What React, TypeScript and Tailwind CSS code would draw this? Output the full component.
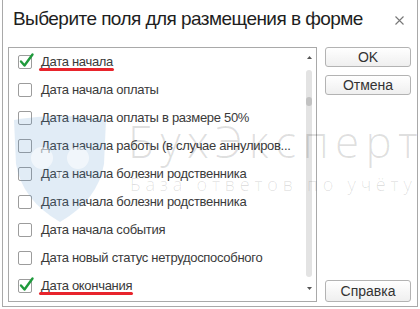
import React from "react";

type Item = { label: string; checked?: boolean; marked?: boolean };

const items: Item[] = [
  { label: "Дата начала", checked: true, marked: true },
  { label: "Дата начала оплаты" },
  { label: "Дата начала оплаты в размере 50%" },
  { label: "Дата начала работы (в случае аннулиров..." },
  { label: "Дата начала болезни родственника" },
  { label: "Дата начала болезни родственника" },
  { label: "Дата начала события" },
  { label: "Дата новый статус нетрудоспособного" },
  { label: "Дата окончания", checked: true, marked: true },
];

function CheckBox({ checked }: { checked?: boolean }) {
  return (
    <div className="relative w-[14px] h-[14px] shrink-0 border border-[#9c9c9c] rounded-[2px] bg-white">
      {checked && (
        <svg className="absolute -left-[1px] -top-[4px]" width="17" height="17" viewBox="0 0 17 17">
          <path d="M3 9.5 L6.5 13.5 L14.5 2.5" fill="none" stroke="#1f9a3c" strokeWidth="2.4" strokeLinecap="round" strokeLinejoin="round" />
        </svg>
      )}
    </div>
  );
}

function Button({ children, className = "" }: { children: React.ReactNode; className?: string }) {
  return (
    <div
      className={
        "flex items-center justify-center border border-[#b3b3b3] rounded-[3px] bg-gradient-to-b from-white to-[#efefef] text-[14px] text-[#333] " +
        className
      }
    >
      {children}
    </div>
  );
}

export default function App() {
  return (
    <div className="relative w-[420px] h-[309px] overflow-hidden bg-white font-['Liberation_Sans',Arial,sans-serif]">
      <div className="mx-[2px] h-[307px] flex flex-col border-x border-b border-[#a9a9a9]">
        {/* title */}
        <div className="flex items-start justify-between h-[47px] pl-[10px] pr-[13px]">
          <span className="mt-[8px] leading-[22px] text-[19px] tracking-[-0.55px] text-[#1e1e1e]">Выберите поля для размещения в форме</span>
          <svg className="mt-[16px]" width="9" height="9" viewBox="0 0 9 9">
            <path d="M0.5 0.5 L8.5 8.5 M8.5 0.5 L0.5 8.5" stroke="#777" strokeWidth="1.1" />
          </svg>
        </div>

        {/* body */}
        <div className="flex pl-[5px]">
          <div className="flex w-[309px] h-[255px] border border-[#a9a9a9]">
            <div className="flex-1 flex flex-col">
              {items.map((it, i) => (
                <div key={i} className="flex items-center h-[28px] pl-[9px]">
                  <CheckBox checked={it.checked} />
                  <span className="relative ml-[9px] leading-[16px] text-[13px] tracking-[-0.3px] text-[#3a3a3a] whitespace-nowrap">
                    {it.label}
                    {it.marked && (
                      <span className="absolute -left-[2px] -right-[1px] top-[14px] h-[3px] rounded-full bg-[#e8242c]" />
                    )}
                  </span>
                </div>
              ))}
            </div>
            {/* scrollbar */}
            <div className="w-[14px] flex flex-col items-center">
              <svg className="mt-[8px]" width="5" height="3" viewBox="0 0 5 3">
                <path d="M2.5 0 L5 3 L0 3 Z" fill="#555" />
              </svg>
              <div className="relative mt-[11px] w-[6px] h-[207px] rounded-full bg-[#e3e3e3]">
                <div className="absolute left-0 top-[27px] w-[6px] h-[9px] rounded-full bg-[#c2c2c2]" />
              </div>
              <svg className="mt-[10px]" width="5" height="3" viewBox="0 0 5 3">
                <path d="M0 0 L5 0 L2.5 3 Z" fill="#555" />
              </svg>
            </div>
          </div>

          <div className="ml-[8px] w-[86px] flex flex-col">
            <Button className="h-[20px]">OK</Button>
            <Button className="mt-[8px] h-[20px]">Отмена</Button>
            <Button className="mt-auto h-[22px]">Справка</Button>
          </div>
        </div>
      </div>

      {/* watermark */}
      <div className="pointer-events-none absolute inset-0">
        <svg className="absolute left-[12px] top-[114px]" width="96" height="110" viewBox="0 0 96 110">
          <path d="M2 6 Q48 -2 94 6 L92 50 Q86 86 48 108 Q10 86 4 50 Z" fill="rgba(90,150,205,0.18)" />
          <circle cx="30" cy="44" r="11" fill="rgba(255,255,255,0.55)" />
          <circle cx="66" cy="44" r="11" fill="rgba(255,255,255,0.55)" />
          <path d="M44 58 L48 66 L52 58 Z" fill="rgba(255,255,255,0.55)" />
        </svg>
        <div className="absolute left-[128px] top-[119px] leading-none text-[44px] font-light tracking-[6.3px] font-['Open_Sans',sans-serif] text-[rgba(0,0,0,0.12)] whitespace-nowrap">
          БухЭкспер<span className="tracking-normal">т</span>
        </div>
        <div className="absolute left-[130px] top-[173px] leading-[22px] text-[18px] font-light tracking-[4.8px] font-['Open_Sans',sans-serif] text-[rgba(0,0,0,0.12)] whitespace-nowrap">
          База ответов по учёт<span className="tracking-normal">у</span>
        </div>
      </div>
    </div>
  );
}
